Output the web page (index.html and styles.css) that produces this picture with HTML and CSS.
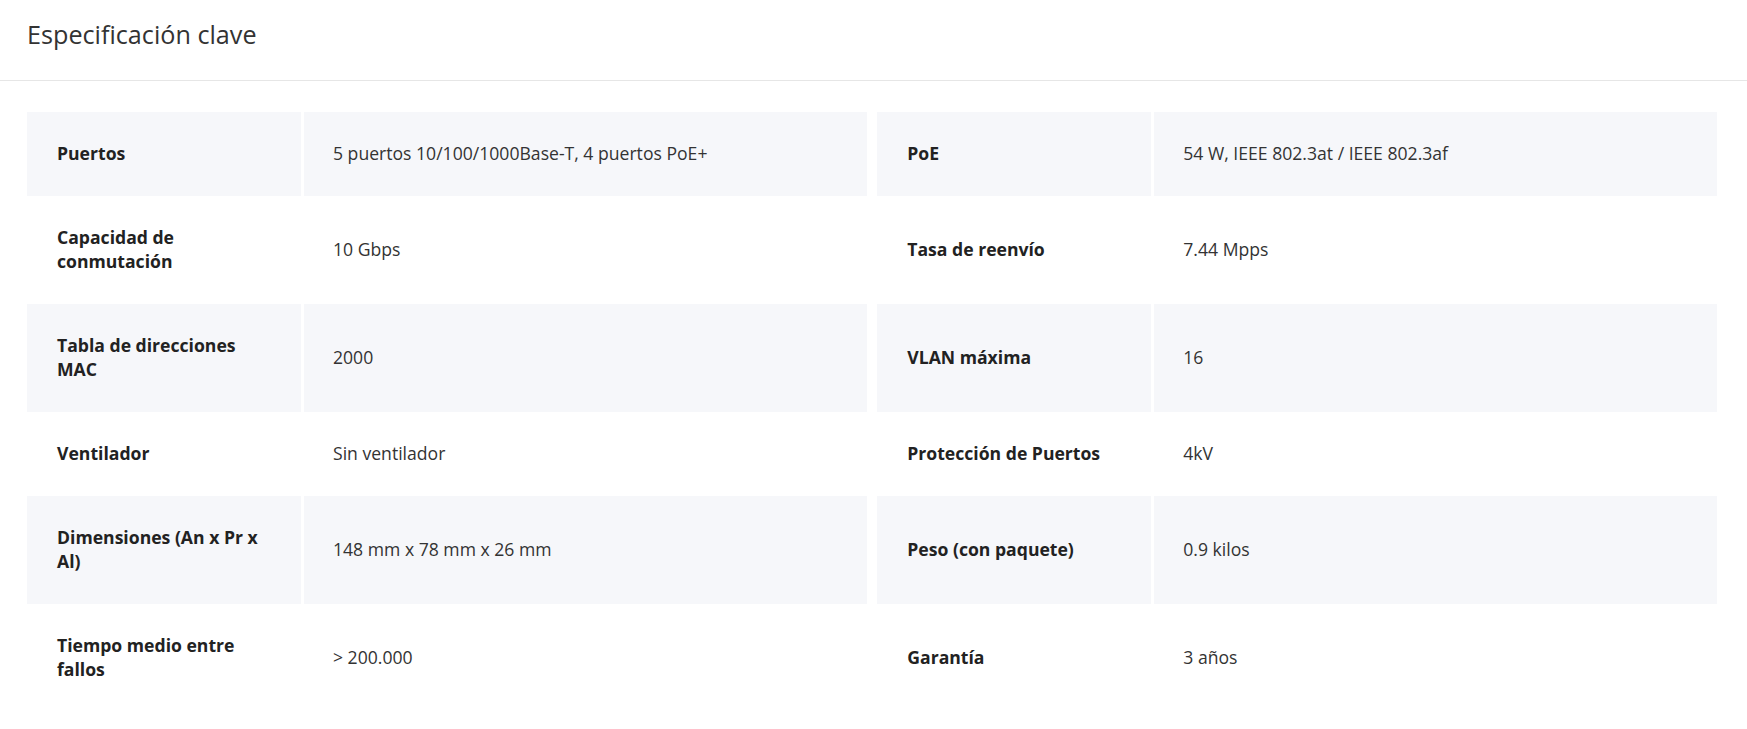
FILE: index.html
```html
<!DOCTYPE html>
<html lang="es">
<head>
<meta charset="utf-8">
<title>Especificación clave</title>
<link rel="stylesheet" href="styles.css">
</head>
<body>
<header class="spec-header">
  <h2 class="spec-title">Especificación clave</h2>
</header>
<section class="spec-body">
  <div class="spec-row shaded">
    <div class="spec-pair"><div class="spec-label">Puertos</div><div class="spec-value">5 puertos 10/100/1000Base-T, 4 puertos PoE+</div></div>
    <div class="spec-pair"><div class="spec-label">PoE</div><div class="spec-value">54 W, IEEE 802.3at / IEEE 802.3af</div></div>
  </div>
  <div class="spec-row">
    <div class="spec-pair"><div class="spec-label">Capacidad de conmutación</div><div class="spec-value">10 Gbps</div></div>
    <div class="spec-pair"><div class="spec-label">Tasa de reenvío</div><div class="spec-value">7.44 Mpps</div></div>
  </div>
  <div class="spec-row shaded">
    <div class="spec-pair"><div class="spec-label">Tabla de direcciones MAC</div><div class="spec-value">2000</div></div>
    <div class="spec-pair"><div class="spec-label">VLAN máxima</div><div class="spec-value">16</div></div>
  </div>
  <div class="spec-row">
    <div class="spec-pair"><div class="spec-label">Ventilador</div><div class="spec-value">Sin ventilador</div></div>
    <div class="spec-pair"><div class="spec-label">Protección de Puertos</div><div class="spec-value">4kV</div></div>
  </div>
  <div class="spec-row shaded">
    <div class="spec-pair"><div class="spec-label">Dimensiones (An x Pr x Al)</div><div class="spec-value">148 mm x 78 mm x 26 mm</div></div>
    <div class="spec-pair"><div class="spec-label">Peso (con paquete)</div><div class="spec-value">0.9 kilos</div></div>
  </div>
  <div class="spec-row">
    <div class="spec-pair"><div class="spec-label">Tiempo medio entre fallos</div><div class="spec-value">&gt; 200.000</div></div>
    <div class="spec-pair"><div class="spec-label">Garantía</div><div class="spec-value">3 años</div></div>
  </div>
</section>
</body>
</html>
```
FILE: styles.css
```css
* { box-sizing: border-box; }
html, body {
  margin: 0;
  padding: 0;
  background: #fff;
}
body {
  font-family: "Open Sans", "Noto Sans", sans-serif;
  color: #333;
}
.spec-header {
  height: 81px;
  border-bottom: 1px solid #e6e6e6;
  padding: 0 27px;
  display: flex;
  align-items: center;
}
.spec-title {
  margin: 0 0 12px 0;
  font-size: 25.2px;
  font-weight: 400;
  line-height: 32px;
  color: #333;
}
.spec-body {
  padding: 31px 30px 16px 27px;
}
.spec-row {
  display: flex;
  gap: 10.6px;
}
.spec-pair {
  flex: 1 1 0;
  display: grid;
  grid-template-columns: 273.7fr 562.7fr;
  column-gap: 3.3px;
}
.spec-label,
.spec-value {
  padding: 29px 30px 31px 30px;
  font-size: 17.6px;
  line-height: 24px;
  display: flex;
  align-items: center;
}
.spec-label {
  font-weight: 700;
  color: #222;
}
.spec-value {
  font-weight: 400;
  color: #333;
  padding-left: 29px;
}
.shaded .spec-label,
.shaded .spec-value {
  background: #f6f7fa;
}
```
